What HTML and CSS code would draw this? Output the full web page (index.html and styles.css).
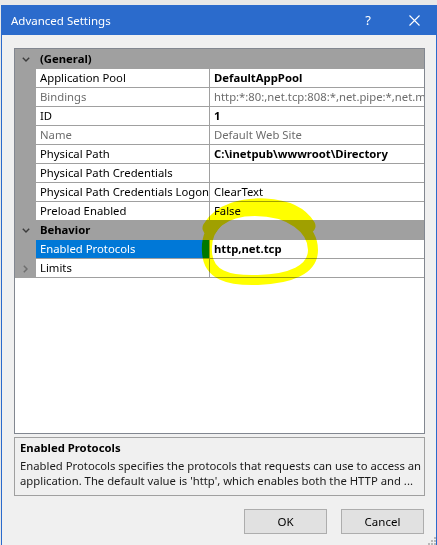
FILE: index.html
```html
<!DOCTYPE html>
<html>
<head>
<meta charset="utf-8">
<title>Advanced Settings</title>
<link rel="stylesheet" href="styles.css">
</head>
<body>
<div class="window">
  <div class="titlebar">
    <span class="title">Advanced Settings</span>
    <div class="caption">
      <span class="cap-btn help">?</span>
      <span class="cap-btn close">
        <svg width="11" height="11" viewBox="0 0 11 11"><path d="M0.5 0.5 L10.5 10.5 M10.5 0.5 L0.5 10.5" stroke="#fff" stroke-width="1.1" fill="none"/></svg>
      </span>
    </div>
  </div>
  <div class="client">
    <div class="grid">
      <div class="cat first">
        <span class="gut"><svg width="8" height="5" viewBox="0 0 8 5"><path d="M0.8 0.8 L4 4 L7.2 0.8" stroke="#3c3c3c" stroke-width="1.4" fill="none"/></svg></span>
        <span class="cat-name">(General)</span>
      </div>
      <div class="row"><span class="gut"></span><span class="name">Application Pool</span><span class="val bold">DefaultAppPool</span></div>
      <div class="row dim"><span class="gut"></span><span class="name">Bindings</span><span class="val">http:*:80:,net.tcp:808:*,net.pipe:*,net.msmq.localhost,msmq.formatname:localhost</span></div>
      <div class="row"><span class="gut"></span><span class="name">ID</span><span class="val bold">1</span></div>
      <div class="row dim"><span class="gut"></span><span class="name">Name</span><span class="val">Default Web Site</span></div>
      <div class="row"><span class="gut"></span><span class="name">Physical Path</span><span class="val bold">C:\inetpub\wwwroot\Directory</span></div>
      <div class="row"><span class="gut"></span><span class="name">Physical Path Credentials</span><span class="val"></span></div>
      <div class="row"><span class="gut"></span><span class="name">Physical Path Credentials Logon</span><span class="val">ClearText</span></div>
      <div class="row"><span class="gut"></span><span class="name">Preload Enabled</span><span class="val">False</span></div>
      <div class="cat">
        <span class="gut"><svg width="8" height="5" viewBox="0 0 8 5"><path d="M0.8 0.8 L4 4 L7.2 0.8" stroke="#3c3c3c" stroke-width="1.4" fill="none"/></svg></span>
        <span class="cat-name">Behavior</span>
      </div>
      <div class="row selected"><span class="gut"></span><span class="name">Enabled Protocols</span><span class="val bold">http,net.tcp</span></div>
      <div class="row"><span class="gut"><svg width="5" height="8" viewBox="0 0 5 8"><path d="M0.8 0.8 L4 4 L0.8 7.2" stroke="#6e6e6e" stroke-width="1.5" fill="none"/></svg></span><span class="name">Limits</span><span class="val"></span></div>
    </div>
    <div class="desc">
      <div class="desc-title">Enabled Protocols</div>
      <div class="desc-text">Enabled Protocols specifies the protocols that requests can use to access an</div>
      <div class="desc-text">application. The default value is 'http', which enables both the HTTP and ...</div>
    </div>
    <div class="buttons">
      <button class="btn">OK</button>
      <button class="btn">Cancel</button>
    </div>
    <svg class="grip" width="9" height="9" viewBox="0 0 9 9">
      <rect x="7" y="1" width="2" height="2" fill="#b8b8b8"/>
      <rect x="4" y="4" width="2" height="2" fill="#b8b8b8"/>
      <rect x="7" y="4" width="2" height="2" fill="#b8b8b8"/>
      <rect x="1" y="7" width="2" height="2" fill="#b8b8b8"/>
      <rect x="4" y="7" width="2" height="2" fill="#b8b8b8"/>
      <rect x="7" y="7" width="2" height="2" fill="#b8b8b8"/>
    </svg>
  </div>
</div>
<svg class="marker" width="437" height="545" viewBox="0 0 437 545">
  <g fill="none" stroke="#ffff00" stroke-linecap="round" stroke-linejoin="round">
    <path d="M207 252 C205 226 224 211 255 211 C290 211 313 229 313 250 C313 270 290 279 258 280 C228 281 208 275 207 252 Z" stroke-width="10"/>
    <path d="M210 228 C220 210 245 205 265 206 C285 207 300 213 308 226" stroke-width="15"/>
  </g>
</svg>
</body>
</html>
```
FILE: styles.css
```css
html, body {
  margin: 0;
  padding: 0;
}
body {
  background: #e8e8e8;
  font-family: "Noto Sans", "Open Sans", sans-serif;
  font-size: 11.3px;
  color: #000;
  width: 437px;
  height: 545px;
  overflow: hidden;
  position: relative;
}
.window {
  margin: 5px 0 0 1px;
  width: 436px;
  box-sizing: border-box;
  border-left: 1px solid #2b6bcc;
  border-right: 1px solid #2b6bcc;
  background: #f0f0f0;
}
.titlebar {
  height: 30px;
  margin: 0 -1px;
  background: #2b6bcc;
  display: flex;
  align-items: center;
  color: #fff;
}
.title {
  padding-left: 10px;
  flex: 1;
  font-size: 11.5px;
}
.caption {
  display: flex;
  height: 30px;
}
.cap-btn {
  width: 46px;
  display: flex;
  align-items: center;
  justify-content: center;
}
.help {
  font-size: 13px;
}
.client {
  position: relative;
  height: 510px;
  padding: 13px 11px 0 12px;
  box-sizing: border-box;
}
.grid {
  height: 386px;
  box-sizing: border-box;
  border: 1px solid #828790;
  background: #fff;
  overflow: hidden;
}
.row, .cat {
  display: grid;
  grid-template-columns: 21px 174px 1fr;
  height: 19px;
  line-height: 18px;
  white-space: nowrap;
}
.cat {
  background: #a0a0a0;
  grid-template-columns: 21px 1fr;
}
.cat.first {
  height: 20px;
  line-height: 19px;
}
.gut {
  background: #a0a0a0;
  display: flex;
  align-items: center;
  justify-content: center;
}
.cat-name {
  font-weight: bold;
  padding-left: 4px;
}
.name, .val {
  border-bottom: 1px solid #a0a0a0;
  overflow: hidden;
}
.name {
  padding-left: 4px;
  border-right: 1px solid #a0a0a0;
}
.val {
  padding-left: 4px;
}
.bold {
  font-weight: bold;
}
.dim .name, .dim .val {
  color: #6d6d6d;
}
.selected .name {
  background: #0078d7;
  color: #fff;
}
.desc {
  margin-top: 3px;
  height: 59px;
  box-sizing: border-box;
  border: 1px solid #a0a0a0;
  padding: 2px 5px 0 5px;
  line-height: 15px;
  white-space: nowrap;
  overflow: hidden;
  color: #1a1a1a;
}
.desc-title {
  font-weight: bold;
  color: #000;
  margin-bottom: 3px;
}
.buttons {
  display: flex;
  justify-content: flex-end;
  gap: 14px;
  margin-top: 13px;
  margin-right: 1px;
}
.btn {
  width: 83px;
  height: 25px;
  background: #e1e1e1;
  border: 1px solid #adadad;
  font-family: inherit;
  font-size: 11.5px;
  color: #000;
  padding: 0;
}
.grip {
  position: absolute;
  right: 0;
  bottom: 0;
}
.marker {
  position: absolute;
  left: 0;
  top: 0;
  mix-blend-mode: multiply;
  pointer-events: none;
}
```
